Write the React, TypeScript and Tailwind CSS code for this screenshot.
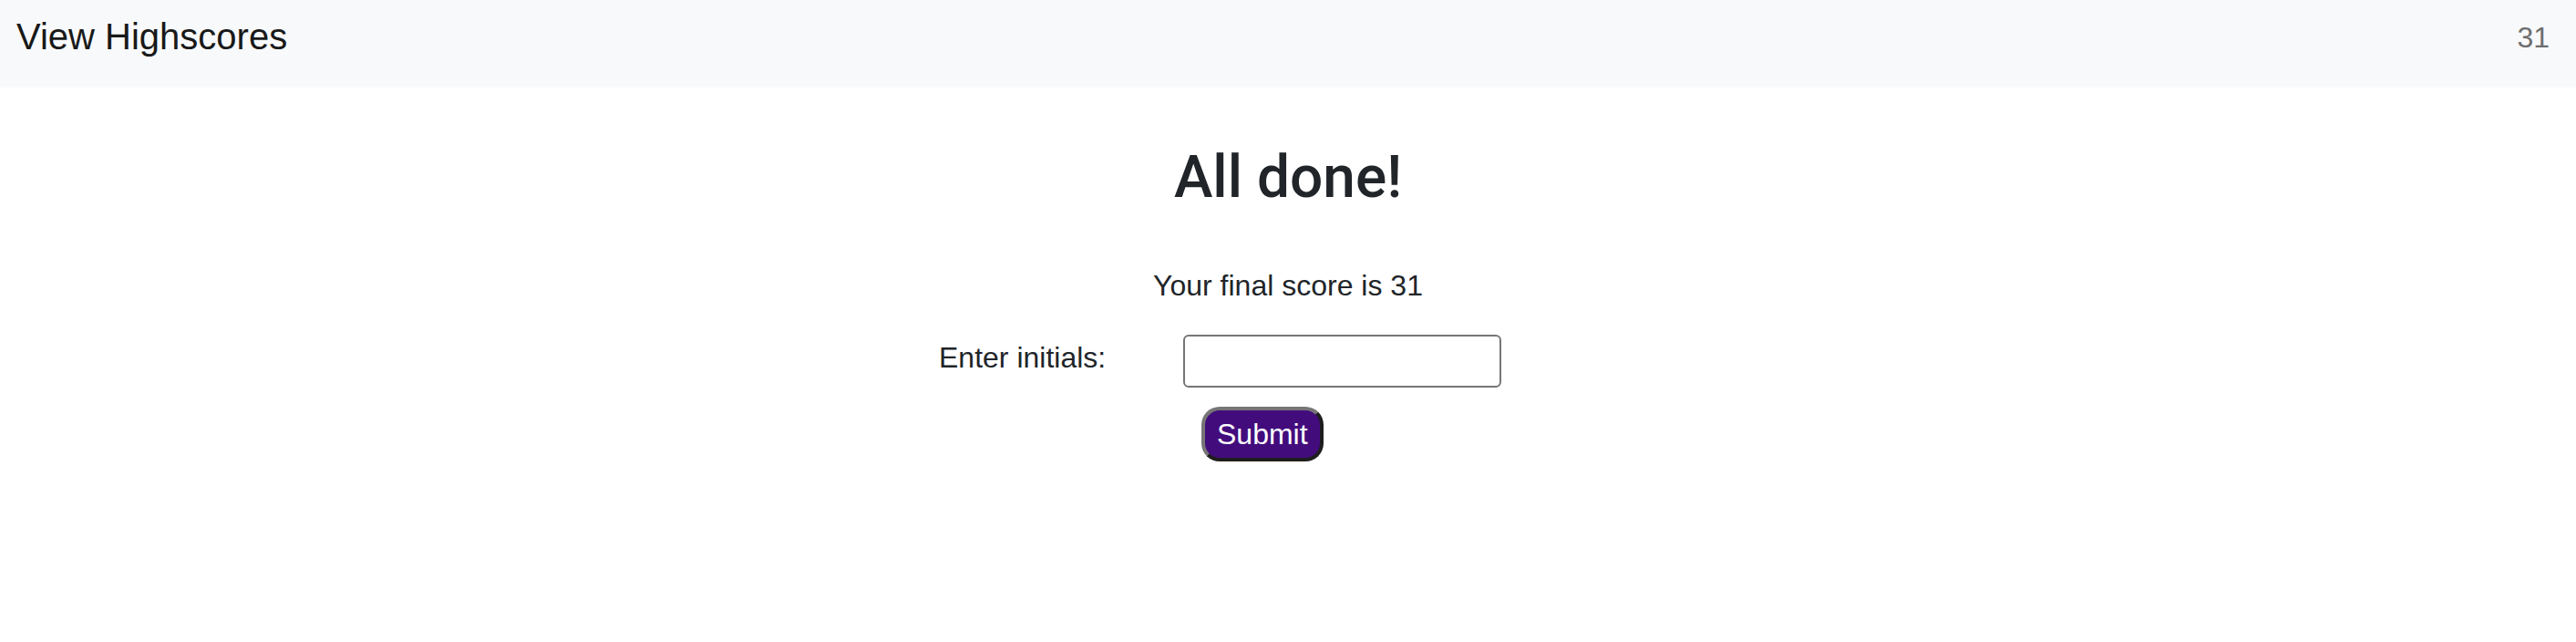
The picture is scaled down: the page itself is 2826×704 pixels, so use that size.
/* Quiz end screen: navbar with highscores link + timer, then the "All done!" form. */

const body = "font-['Liberation_Sans',Arial,sans-serif]";

function NavBar({ time }: { time: number }) {
  return (
    <header className="flex h-[96px] items-start justify-between bg-[#f8f9fa] pl-[18px] pr-[29px]">
      <a className="mt-[16px] text-[40px] leading-[48px] text-[#191919]" href="#">
        View Highscores
      </a>
      <span className="mt-[17px] text-[32px] leading-[48px] text-[#6d6e6f]">{time}</span>
    </header>
  );
}

function ScoreForm({ score }: { score: number }) {
  return (
    <main className="flex flex-col items-center text-[#212529]">
      <h1 className="mt-[61px] font-['Roboto','Liberation_Sans',sans-serif] text-[64px] font-medium leading-[76px]">
        All done!
      </h1>
      <p className="mt-[56px] text-[32px] leading-[48px]">Your final score is {score}</p>

      <form className="mt-[30px] flex w-[766px] flex-col" onSubmit={(e) => e.preventDefault()}>
        <div className="flex items-start">
          <label htmlFor="initials" className="mt-[1px] w-[268px] text-[32px] leading-[48px]">
            Enter initials:
          </label>
          <input
            id="initials"
            type="text"
            className="h-[58px] w-[349px] rounded-[6px] border-2 border-[#767676] bg-white px-2 text-[32px] outline-none"
          />
        </div>
        <div className="mt-[21px] flex">
          <button
            type="submit"
            className="ml-[288px] rounded-[20px] border-4 border-t-[#767676] border-l-[#767676] border-b-[#1e1e1e] border-r-[#1e1e1e] bg-[#430c7d] px-[13px] py-[2px] text-[32px] leading-[48px] text-white"
          >
            Submit
          </button>
        </div>
      </form>
    </main>
  );
}

export default function App() {
  return (
    <div className={`min-h-[704px] bg-white ${body}`}>
      <NavBar time={31} />
      <ScoreForm score={31} />
    </div>
  );
}
